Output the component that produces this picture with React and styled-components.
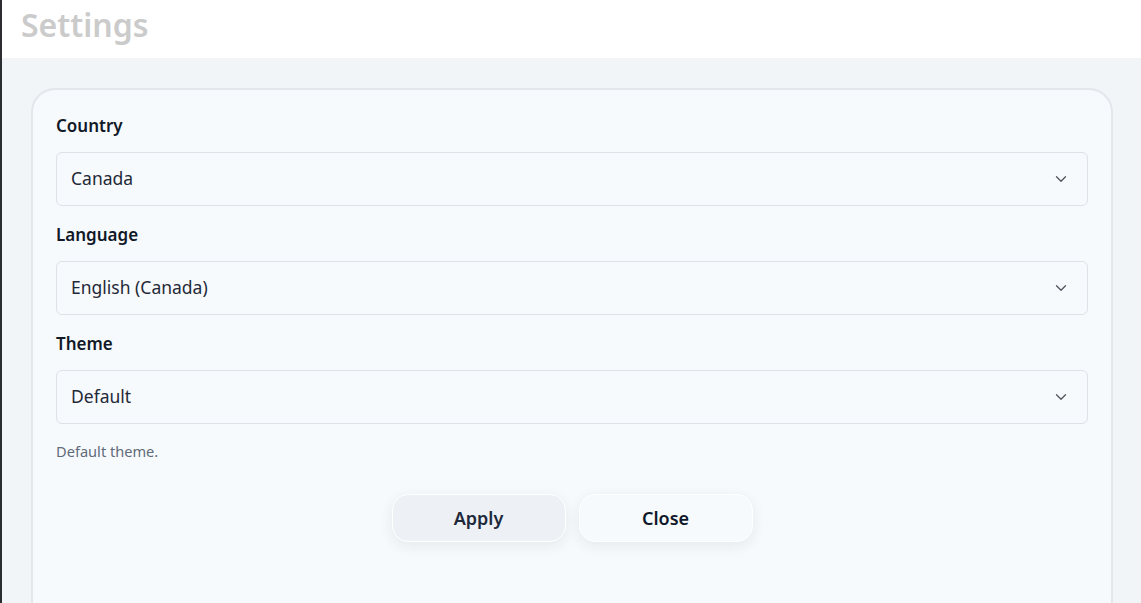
import styled, { createGlobalStyle } from "styled-components";
import { ChevronDown } from "lucide-react";

const GlobalStyle = createGlobalStyle`
  html, body {
    margin: 0;
    padding: 0;
    height: 100%;
    overflow: hidden;
  }
  body {
    font-family: "Noto Sans", "Open Sans", sans-serif;
    background: #f2f5f8;
  }
`

const Page = styled.div`
  display: flex;
  flex-flow: column nowrap;
  height: 603px;
  border-left: 2px solid #2b2d31;
  background: #f2f5f8;
`

const Header = styled.header`
  height: 58px;
  background: #ffffff;
  display: flex;
  align-items: center;
  padding-left: 19px;
  flex-shrink: 0;
  h1 {
    margin: 0;
    font-size: 32px;
    font-weight: 600;
    color: #cbcbcb;
    line-height: 1;
    margin-top: -8px;
  }
`

const Main = styled.main`
  flex: 1;
  padding: 30px 28px 0 29px;
  display: flex;
  min-height: 0;
`

const Card = styled.section`
  flex: 1;
  background: #f7fafc;
  border: 2px solid #e3e7ec;
  border-bottom: none;
  border-radius: 24px 24px 0 0;
  padding: 24px 23px 0 23px;
`

const Field = styled.div`
  margin-bottom: 17px;
`

const Label = styled.label`
  display: block;
  font-size: 17px;
  font-weight: 650;
  line-height: 24px;
  color: #111827;
  margin-bottom: 14px;
`

const Select = styled.div`
  height: 54px;
  box-sizing: border-box;
  border: 1px solid #dde2e8;
  border-radius: 6px;
  background: #f7fafc;
  display: flex;
  align-items: center;
  justify-content: space-between;
  padding: 0 17px 3px 14px;
  font-size: 17.5px;
  color: #1f2937;
  svg {
    color: #50565e;
    margin-top: 3px;
  }
`

const Hint = styled.p`
  margin: 0;
  font-size: 14.6px;
  line-height: 20px;
  color: #5f6b7a;
`

const Actions = styled.div`
  display: flex;
  justify-content: center;
  gap: 13px;
  margin-top: 33px;
`

const Button = styled.button`
  width: 174px;
  height: 48px;
  border-radius: 16px;
  border: 1px solid #ffffff;
  background: ${p => (p.$primary ? "#edf1f5" : "#f7fafc")};
  box-shadow: 0 4px 14px rgba(30, 41, 59, 0.08);
  font-family: inherit;
  font-size: 18px;
  font-weight: 600;
  color: ${p => (p.$primary ? "#1e293b" : "#0f172a")};
  cursor: pointer;
`

const fields = [
  { label: "Country", value: "Canada" },
  { label: "Language", value: "English (Canada)" },
  { label: "Theme", value: "Default" },
]

function App() {
  return (
    <Page>
      <GlobalStyle />
      <Header>
        <h1>Settings</h1>
      </Header>
      <Main>
        <Card>
          {fields.map(f => (
            <Field key={f.label}>
              <Label>{f.label}</Label>
              <Select>
                <span>{f.value}</span>
                <ChevronDown size={18} strokeWidth={1.75} />
              </Select>
            </Field>
          ))}
          <Hint>Default theme.</Hint>
          <Actions>
            <Button $primary>Apply</Button>
            <Button>Close</Button>
          </Actions>
        </Card>
      </Main>
    </Page>
  );
}

export default App;
